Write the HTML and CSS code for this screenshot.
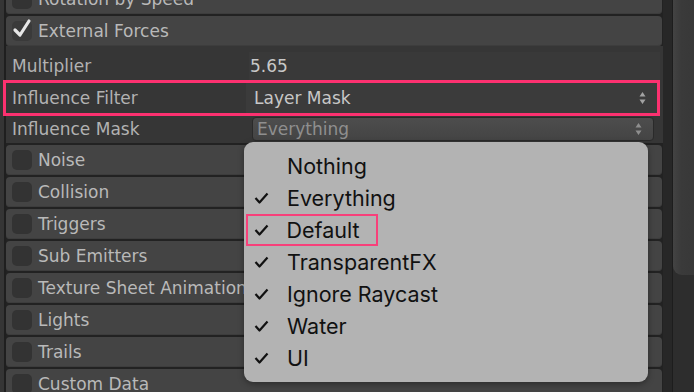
FILE: index.html
```html
<!DOCTYPE html>
<html>
<head>
<meta charset="utf-8">
<link rel="stylesheet" href="styles.css">
</head>
<body>
<div class="window">
  <div class="inspector">
    <div class="modules head">
      <div class="module"><span class="cb"></span><span class="name">Rotation by Speed</span></div>
      <div class="module"><span class="cb on"><svg width="22" height="22" viewBox="0 0 22 22"><path d="M4 12 L9 17 L18 3" fill="none" stroke="#e6e6e6" stroke-width="3.2" stroke-linecap="round" stroke-linejoin="round"/></svg></span><span class="name">External Forces</span></div>
    </div>
    <div class="props">
      <div class="prop p-mult"><span class="label">Multiplier</span><span class="field">5.65</span></div>
      <div class="prop p-filter"><span class="label">Influence Filter</span><span class="field select">Layer Mask<svg class="arrows" width="7" height="14" viewBox="0 0 7 14"><path d="M0.5 5.5 L3.5 1 L6.5 5.5Z M0.5 8.5 L3.5 13 L6.5 8.5Z" fill="#a2a2a2"/></svg></span></div>
      <div class="prop p-mask"><span class="label">Influence Mask</span><span class="field button">Everything<svg class="arrows" width="7" height="14" viewBox="0 0 7 14"><path d="M0.5 5.5 L3.5 1 L6.5 5.5Z M0.5 8.5 L3.5 13 L6.5 8.5Z" fill="#8e8e8e"/></svg></span></div>
    </div>
    <div class="modules">
      <div class="module"><span class="cb"></span><span class="name">Noise</span></div>
      <div class="module"><span class="cb"></span><span class="name">Collision</span></div>
      <div class="module"><span class="cb"></span><span class="name">Triggers</span></div>
      <div class="module"><span class="cb"></span><span class="name">Sub Emitters</span></div>
      <div class="module"><span class="cb"></span><span class="name">Texture Sheet Animation</span></div>
      <div class="module"><span class="cb"></span><span class="name">Lights</span></div>
      <div class="module"><span class="cb"></span><span class="name">Trails</span></div>
      <div class="module"><span class="cb"></span><span class="name">Custom Data</span></div>
    </div>
  </div>
  <div class="scroll"><div class="gap"></div><div class="track"><div class="thumb"></div></div></div>
  <div class="popup">
    <div class="item"><span class="check"></span><span class="txt">Nothing</span></div>
    <div class="item on"><span class="check"><svg width="15" height="12" viewBox="0 0 15 12"><path d="M1.5 6 L5.5 10.5 L13.5 1.5" fill="none" stroke="#111" stroke-width="2.2" stroke-linejoin="round"/></svg></span><span class="txt">Everything</span></div>
    <div class="item on mark"><span class="check"><svg width="15" height="12" viewBox="0 0 15 12"><path d="M1.5 6 L5.5 10.5 L13.5 1.5" fill="none" stroke="#111" stroke-width="2.2" stroke-linejoin="round"/></svg></span><span class="txt">Default</span></div>
    <div class="item on"><span class="check"><svg width="15" height="12" viewBox="0 0 15 12"><path d="M1.5 6 L5.5 10.5 L13.5 1.5" fill="none" stroke="#111" stroke-width="2.2" stroke-linejoin="round"/></svg></span><span class="txt">TransparentFX</span></div>
    <div class="item on"><span class="check"><svg width="15" height="12" viewBox="0 0 15 12"><path d="M1.5 6 L5.5 10.5 L13.5 1.5" fill="none" stroke="#111" stroke-width="2.2" stroke-linejoin="round"/></svg></span><span class="txt">Ignore Raycast</span></div>
    <div class="item on"><span class="check"><svg width="15" height="12" viewBox="0 0 15 12"><path d="M1.5 6 L5.5 10.5 L13.5 1.5" fill="none" stroke="#111" stroke-width="2.2" stroke-linejoin="round"/></svg></span><span class="txt">Water</span></div>
    <div class="item on"><span class="check"><svg width="15" height="12" viewBox="0 0 15 12"><path d="M1.5 6 L5.5 10.5 L13.5 1.5" fill="none" stroke="#111" stroke-width="2.2" stroke-linejoin="round"/></svg></span><span class="txt">UI</span></div>
  </div>
</div>
</body>
</html>
```

FILE: styles.css
```css
html, body {
  margin: 0;
  padding: 0;
}
body {
  width: 694px;
  height: 392px;
  overflow: hidden;
  background: #353535;
  font-family: "DejaVu Sans", "Liberation Sans", sans-serif;
}
.window {
  position: relative;
  display: flex;
  width: 694px;
  height: 392px;
  overflow: hidden;
}
.inspector {
  flex: 1;
  margin-left: 4px;
  border-left: 2px solid #1f1f1f;
  display: flex;
  flex-direction: column;
  background: #363636;
}
.modules {
  display: flex;
  flex-direction: column;
  gap: 2px;
  background: #222;
  padding-top: 2px;
  padding-right: 1px;
}
.modules.head {
  margin-top: -18px;
}
.module {
  height: 30px;
  flex: none;
  display: flex;
  align-items: center;
  background: #444;
  border-radius: 4px;
  box-shadow: inset 0 -1px 0 #3d3d3d;
}
.cb {
  width: 20px;
  height: 20px;
  margin-left: 6px;
  border-radius: 5px;
  background: #333;
  flex: none;
  position: relative;
}
.cb.on {
  background: #3a3a3a;
}
.cb.on svg {
  position: absolute;
  left: -1px;
  top: -3px;
}
.name {
  margin-left: 6px;
  font-size: 17px;
  color: #b9b9b9;
  white-space: nowrap;
}
.props {
  display: flex;
  flex-direction: column;
  height: 97px;
  padding-right: 1px;
}
.prop {
  display: flex;
  align-items: center;
  box-sizing: border-box;
}
.label {
  width: 237px;
  padding-left: 6px;
  font-size: 17px;
  color: #b2b2b2;
  white-space: nowrap;
  flex: none;
}
.p-mult {
  height: 34px;
  padding-top: 6px;
}
.p-filter {
  height: 36px;
  margin-left: -3px;
  padding-left: 3px;
  border: 3px solid #fc3170;
  margin-right: 2px;
}
.p-filter .label {
  width: 234px;
  padding-left: 3px;
}
.p-mask {
  height: 27px;
  padding-bottom: 2px;
}
.field {
  flex: 1;
  font-size: 17px;
  color: #c8c8c8;
  padding-left: 0;
  display: flex;
  align-items: center;
}
.p-mult .field {
  align-self: stretch;
  background: #393939;
  margin: 0 2px 0 0;
  padding-left: 1px;
}
.select {
  align-self: stretch;
  background: #3b3b3b;
  padding-left: 8px;
  margin-right: 0;
}
.arrows {
  margin-left: auto;
  margin-right: 11px;
}
.button {
  height: 24px;
  margin-left: 3px;
  margin-right: 8px;
  padding-left: 4px;
  border-radius: 4px;
  border: 1px solid #2a2a2a;
  background: linear-gradient(#4d4d4d, #444);
  color: #8f8f8f;
  box-sizing: border-box;
}
.button .arrows {
  margin-right: 11px;
}
.scroll {
  width: 31px;
  flex: none;
  display: flex;
  background: #2b2b2b;
}
.gap {
  width: 9px;
  background: #272727;
  border-right: 1px solid #1d1d1d;
}
.track {
  flex: 1;
  background: #2d2d2d;
}
.thumb {
  height: 275px;
  background: linear-gradient(90deg, #434343, #3a3a3a 40%, #383838);
  border-radius: 0 0 0 9px;
}
.popup {
  position: absolute;
  left: 244px;
  top: 142px;
  width: 404px;
  height: 240px;
  box-sizing: border-box;
  padding: 8px 0;
  background: #b3b3b3;
  border-radius: 9px;
  box-shadow: 0 2px 6px rgba(0,0,0,0.35);
  font-family: Inter, "Noto Sans", sans-serif;
}
.item {
  height: 32px;
  display: flex;
  align-items: center;
  font-size: 21.5px;
  color: #111;
}
.check {
  width: 15px;
  margin-left: 10px;
  margin-right: 18px;
  display: flex;
}
.mark {
  width: 132px;
  margin-left: 2px;
  box-sizing: border-box;
  border: 2.5px solid #f8407a;
}
.mark .check {
  margin-left: 5.5px;
}
```
